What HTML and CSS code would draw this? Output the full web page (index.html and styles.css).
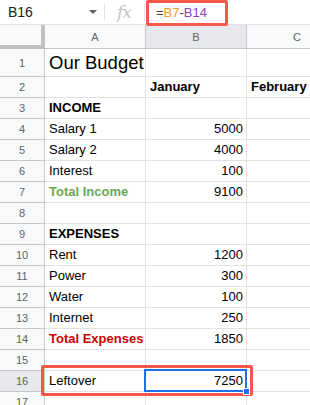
FILE: index.html
```html
<!DOCTYPE html>
<html lang="en">
<head>
    <meta charset="UTF-8">
    <title>Our Budget</title>
    <link rel="stylesheet" href="styles.css">
</head>
<body>
    <div class="toolbar">
        <div class="name-box">B16</div>
        <div class="name-arrow"></div>
        <div class="sep"></div>
        <div class="fx">fx</div>
        <div class="sep"></div>
        <div class="formula">=<span class="ref-orange">B7</span>-<span class="ref-purple">B14</span></div>
    </div>

    <div class="sheet">
        <div class="row head-row">
            <div class="rh corner"></div>
            <div class="cell a ch">A</div>
            <div class="cell b ch selected-head">B</div>
            <div class="cell c ch ch-cut">C</div>
        </div>
        <div class="row tall">
            <div class="rh">1</div>
            <div class="cell a title">Our Budget</div>
            <div class="cell b"></div>
            <div class="cell c"></div>
        </div>
        <div class="row">
            <div class="rh">2</div>
            <div class="cell a"></div>
            <div class="cell b bold">January</div>
            <div class="cell c bold">February</div>
        </div>
        <div class="row">
            <div class="rh">3</div>
            <div class="cell a bold">INCOME</div>
            <div class="cell b"></div>
            <div class="cell c"></div>
        </div>
        <div class="row">
            <div class="rh">4</div>
            <div class="cell a">Salary 1</div>
            <div class="cell b num">5000</div>
            <div class="cell c"></div>
        </div>
        <div class="row">
            <div class="rh">5</div>
            <div class="cell a">Salary 2</div>
            <div class="cell b num">4000</div>
            <div class="cell c"></div>
        </div>
        <div class="row">
            <div class="rh">6</div>
            <div class="cell a">Interest</div>
            <div class="cell b num">100</div>
            <div class="cell c"></div>
        </div>
        <div class="row">
            <div class="rh">7</div>
            <div class="cell a bold green">Total Income</div>
            <div class="cell b num">9100</div>
            <div class="cell c"></div>
        </div>
        <div class="row">
            <div class="rh">8</div>
            <div class="cell a"></div>
            <div class="cell b"></div>
            <div class="cell c"></div>
        </div>
        <div class="row">
            <div class="rh">9</div>
            <div class="cell a bold">EXPENSES</div>
            <div class="cell b"></div>
            <div class="cell c"></div>
        </div>
        <div class="row">
            <div class="rh">10</div>
            <div class="cell a">Rent</div>
            <div class="cell b num">1200</div>
            <div class="cell c"></div>
        </div>
        <div class="row">
            <div class="rh">11</div>
            <div class="cell a">Power</div>
            <div class="cell b num">300</div>
            <div class="cell c"></div>
        </div>
        <div class="row">
            <div class="rh">12</div>
            <div class="cell a">Water</div>
            <div class="cell b num">100</div>
            <div class="cell c"></div>
        </div>
        <div class="row">
            <div class="rh">13</div>
            <div class="cell a">Internet</div>
            <div class="cell b num">250</div>
            <div class="cell c"></div>
        </div>
        <div class="row">
            <div class="rh">14</div>
            <div class="cell a bold red">Total Expenses</div>
            <div class="cell b num">1850</div>
            <div class="cell c"></div>
        </div>
        <div class="row">
            <div class="rh">15</div>
            <div class="cell a"></div>
            <div class="cell b"></div>
            <div class="cell c"></div>
        </div>
        <div class="row">
            <div class="rh selected-head">16</div>
            <div class="cell a">Leftover</div>
            <div class="cell b num active">7250</div>
            <div class="cell c"></div>
        </div>
        <div class="row">
            <div class="rh">17</div>
            <div class="cell a"></div>
            <div class="cell b"></div>
            <div class="cell c"></div>
        </div>

        <div class="callout"></div>
    </div>
</body>
</html>
```

FILE: styles.css
```css
body {
    margin: 0;
    width: 310px;
    height: 405px;
    overflow: hidden;
    background-color: #fff;
    font-family: "Liberation Sans", Arial, sans-serif;
    color: #000;
}

/* formula bar */
.toolbar {
    display: flex;
    align-items: center;
    height: 24px;
    border-bottom: 1px solid #e1e1e1;
    position: relative;
    z-index: 2;
}
.name-box {
    box-sizing: border-box;
    font-size: 14px;
    color: #202124;
    padding-left: 8px;
    width: 89px;
}
.name-arrow {
    width: 0;
    height: 0;
    border-left: 4px solid transparent;
    border-right: 4px solid transparent;
    border-top: 4px solid #5f6368;
    margin-right: 7px;
}
.sep {
    width: 1px;
    height: 18px;
    background-color: #e3e3e3;
}
.fx {
    font-family: "DejaVu Serif", "Liberation Serif", serif;
    font-style: italic;
    font-size: 17px;
    color: #c4c4c4;
    width: 39px;
    padding-left: 12px;
    box-sizing: border-box;
    letter-spacing: -1px;
}
.formula {
    align-self: flex-start;
    margin-left: 1px;
    width: 69px;
    height: 20px;
    border: 3px solid #f4574c;
    border-radius: 2px;
    font-size: 13px;
    color: #444;
    padding-left: 7px;
    line-height: 20px;
}
.ref-orange { color: #f59b2d; }
.ref-purple { color: #8d44b1; }

/* grid */
.sheet {
    position: relative;
}
.row {
    display: flex;
    height: 21px;
}
.row.tall {
    height: 28px;
}
.rh {
    width: 44px;
    flex-shrink: 0;
    border-right: 1px solid #c7c7c7;
    border-bottom: 1px solid #c7c7c7;
    background-color: #f8f9fa;
    color: #5f6368;
    font-size: 11px;
    display: flex;
    align-items: center;
    justify-content: center;
}
.cell {
    flex-shrink: 0;
    box-sizing: border-box;
    border-right: 1px solid #e2e2e2;
    border-bottom: 1px solid #e2e2e2;
    font-size: 13px;
    padding: 0 3px 3px 4px;
    display: flex;
    align-items: flex-end;
    white-space: nowrap;
}
.a { width: 101px; }
.b { width: 101px; }
.c {
    flex: 1;
    min-width: 0;
    border-right: none;
    overflow: hidden;
}

.head-row {
    height: 24px;
}
.head-row .cell,
.corner {
    background-color: #f8f9fa;
    border-bottom: 1px solid #c7c7c7;
    border-right: 1px solid #c7c7c7;
}
.ch {
    color: #5f6368;
    font-size: 11px;
    justify-content: center;
    align-items: center;
    padding: 0;
}
.head-row .ch-cut {
    justify-content: flex-end;
    padding-right: 9px;
    border-right: none;
}
.corner {
    box-sizing: border-box;
    width: 45px;
    border-right: 4px solid #c0c0c0;
    border-bottom: 4px solid #c0c0c0;
}
.head-row .selected-head,
.rh.selected-head {
    background-color: #e6e8eb;
}

.title {
    font-size: 18.5px;
    padding-bottom: 2px;
}
.bold { font-weight: bold; }
.green { color: #6aa84f; }
.red { color: #cc0000; }
.num { justify-content: flex-end; }

.active {
    position: relative;
}
.active::after {
    content: "";
    position: absolute;
    left: -2px;
    top: -2px;
    right: -1px;
    bottom: -1px;
    border: 2px solid #1a73e8;
}
.active::before {
    content: "";
    position: absolute;
    right: -4px;
    bottom: -4px;
    width: 5px;
    height: 5px;
    background-color: #1a73e8;
    border: 1px solid #fff;
    z-index: 1;
}

/* annotation around the result row */
.callout {
    position: absolute;
    left: 41px;
    top: 340px;
    width: 206px;
    height: 25px;
    border: 3px solid #f4574c;
    border-radius: 2px;
    pointer-events: none;
}
```
